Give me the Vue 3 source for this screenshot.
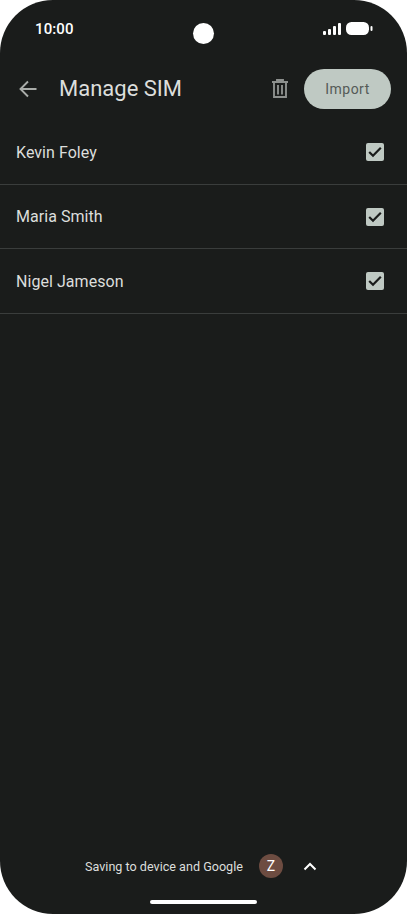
<script setup>
const contacts = ["Kevin Foley", "Maria Smith", "Nigel Jameson"];
</script>

<template>
  <div class="screen">
    <div class="status">
      <span class="time">10:00</span>
      <span class="camera"></span>
      <div class="status-icons">
        <svg width="18" height="12" viewBox="0 0 18 12" fill="#fff">
          <rect x="0" y="8" width="3" height="4" rx="1" />
          <rect x="5" y="6" width="3" height="6" rx="1" />
          <rect x="10" y="3" width="3" height="9" rx="1" />
          <rect x="15" y="0" width="3" height="12" rx="1" />
        </svg>
        <svg width="27" height="14" viewBox="0 0 27 14" fill="#fff">
          <rect x="0" y="0" width="23" height="13" rx="5.5" />
          <rect x="24.5" y="4" width="2" height="5" rx="1" />
        </svg>
      </div>
    </div>

    <div class="toolbar">
      <svg class="back" width="20" height="20" viewBox="0 0 20 20" fill="none" stroke="#a9aca9" stroke-width="1.9">
        <path d="M18.5 10H2.5M10 2.5L2.5 10L10 17.5" />
      </svg>
      <span class="title">Manage SIM</span>
      <svg class="trash" width="16" height="19" viewBox="0 0 16 19" fill="none" stroke="#8d908e" stroke-width="1.9">
        <path d="M0 3h16M5 3V1h6v2M2 3v15h12V3M6 6v9.5M10 6v9.5" />
      </svg>
      <button class="import">Import</button>
    </div>

    <ul class="list">
      <li v-for="name in contacts" :key="name" class="row">
        <span>{{ name }}</span>
        <span class="check">
          <svg width="14" height="12" viewBox="0 0 14 12" fill="none" stroke="#1a1c1b" stroke-width="2.2">
            <path d="M1.2 6l3.8 3.8L12.8 1.8" />
          </svg>
        </span>
      </li>
    </ul>

    <div class="footer">
      <span class="saving">Saving to device and Google</span>
      <span class="avatar">Z</span>
      <svg width="14" height="9" viewBox="0 0 14 9" fill="none" stroke="#fff" stroke-width="2">
        <path d="M1.5 7.5L7 2l5.5 5.5" />
      </svg>
    </div>
    <div class="home-wrap"><span class="home"></span></div>
  </div>
</template>

<style>
html,
body {
  margin: 0;
  background: #fff;
}
</style>

<style scoped>
.screen {
  width: 407px;
  height: 914px;
  background: #1a1c1b;
  border-radius: 53px;
  display: flex;
  flex-direction: column;
  font-family: Roboto, "Liberation Sans", sans-serif;
  overflow: hidden;
}

.status {
  height: 57px;
  padding: 0 35px;
  display: flex;
  justify-content: space-between;
  align-items: flex-start;
  position: relative;
}

.time {
  margin-top: 20px;
  color: #fff;
  font-size: 15px;
  font-weight: 500;
  line-height: 18px;
  letter-spacing: 0.1px;
}

.camera {
  position: absolute;
  left: 193px;
  top: 23px;
  width: 21px;
  height: 21px;
  border-radius: 50%;
  background: #fff;
}

.status-icons {
  margin-top: 22px;
  margin-right: -1px;
  display: flex;
  align-items: center;
  gap: 5px;
}

.toolbar {
  height: 63px;
  display: flex;
  align-items: center;
  padding: 0 16px 0 18px;
}

.title {
  margin-left: 21px;
  color: #dcdedc;
  font-size: 22px;
  flex: 1;
}

.trash {
  margin-right: 16px;
}

.import {
  width: 87px;
  height: 40px;
  border: none;
  border-radius: 20px;
  background: #bfc9c3;
  color: #555a57;
  font-family: inherit;
  font-size: 14px;
  font-weight: 400;
  letter-spacing: 0.5px;
}

.list {
  list-style: none;
  margin: 0;
  padding: 0;
}

.row {
  height: 62.5px;
  padding: 1px 23px 0 16px;
  border-bottom: 1px solid #3a3d3c;
  display: flex;
  align-items: center;
  justify-content: space-between;
  color: #dcdedc;
  font-size: 16px;
  letter-spacing: 0.05px;
}

.check {
  width: 18px;
  height: 18px;
  border-radius: 2px;
  background: #bfc9c3;
  display: flex;
  align-items: center;
  justify-content: center;
}

.footer {
  margin-top: auto;
  margin-bottom: 2px;
  height: 26px;
  display: flex;
  align-items: center;
  padding-left: 85px;
  color: #dcdedc;
  font-size: 12.6px;
}

.avatar {
  margin-left: 16px;
  margin-right: 20px;
  width: 24px;
  height: 24px;
  border-radius: 50%;
  background: #6d4c41;
  color: #fff;
  font-size: 14px;
  display: flex;
  align-items: center;
  justify-content: center;
}

.home-wrap {
  height: 33px;
  display: flex;
  justify-content: center;
  padding-top: 19px;
  box-sizing: border-box;
}

.home {
  width: 107px;
  height: 4px;
  border-radius: 2px;
  background: #fff;
}
</style>
